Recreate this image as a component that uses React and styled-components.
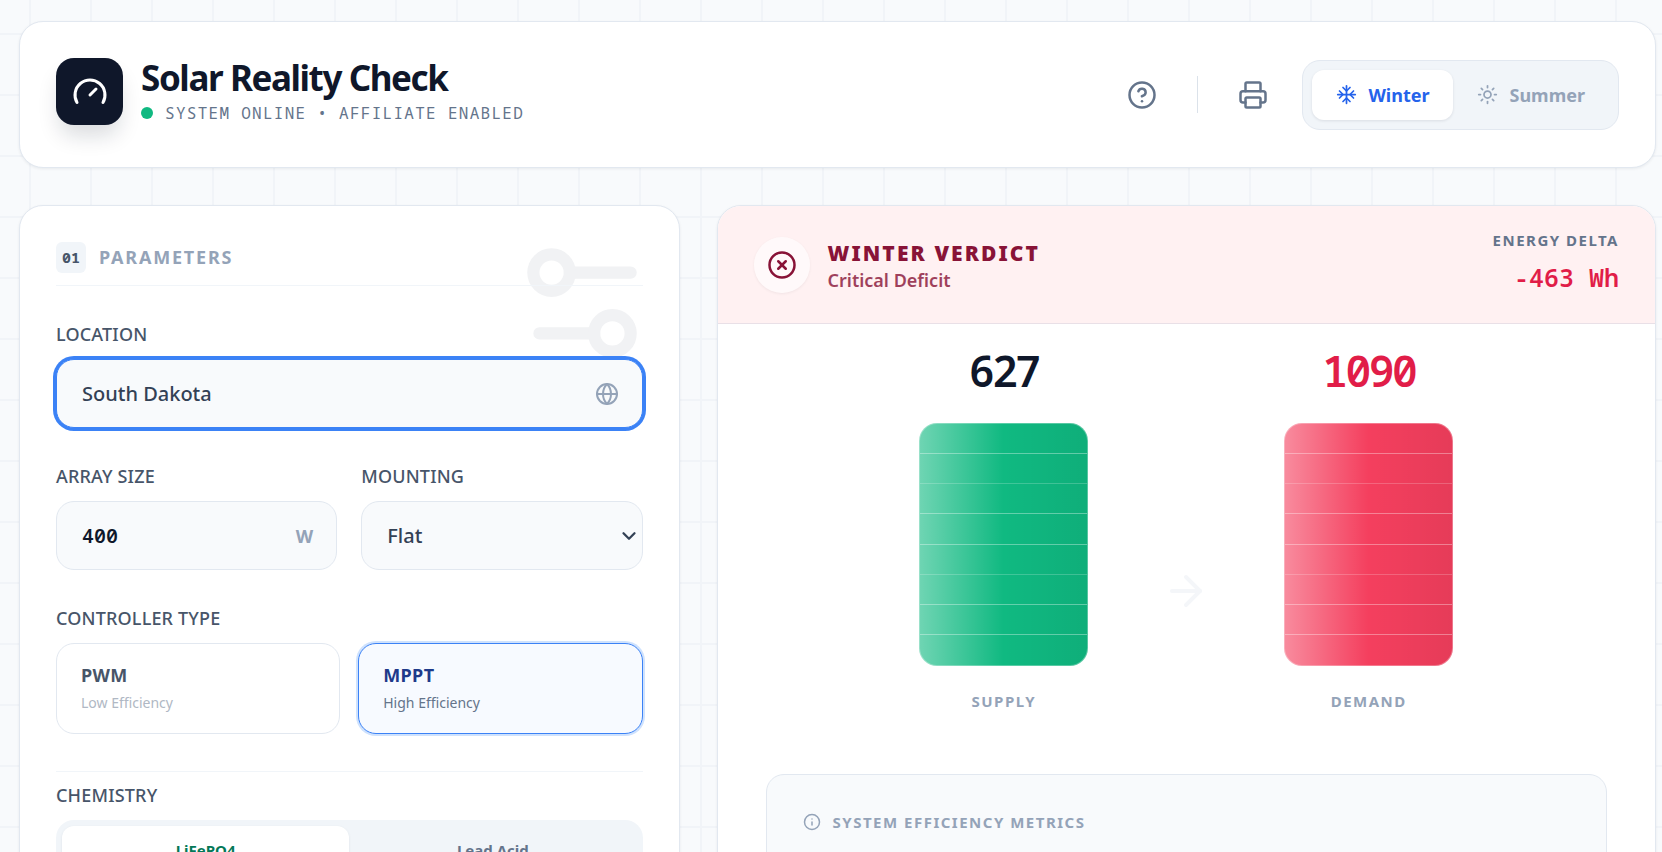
import React, { useState } from "react";
import styled, { createGlobalStyle, css } from "styled-components";
import {
	ArrowRight,
	ChevronDown,
	CircleQuestionMark,
	CircleX,
	Gauge,
	Globe,
	Info,
	Printer,
	Sun,
} from "lucide-react";

const sans = css`font-family: "Noto Sans", "Open Sans", sans-serif;`;
const mono = css`font-family: "Noto Sans Mono", "DejaVu Sans Mono", monospace;`;

const GlobalStyle = createGlobalStyle`
	* { box-sizing: border-box; }

	body {
		margin: 0;
		color: #0f172a;
		background-color: #f8fafc;
		background-image:
			linear-gradient(to right, #f1f4f8 2px, transparent 2px),
			linear-gradient(to bottom, #f1f4f8 2px, transparent 2px);
		background-size: 61px 61px;
		background-position: 29px 33px;
		${sans}
	}

	button, input, select { font: inherit; color: inherit; }
	button { cursor: pointer; }
`;

const Page = styled.div`
	display: flex;
	flex-direction: column;
	gap: 37px;
	padding: 21px 6px 37px 19px;
`;

const card = css`
	background: #fff;
	border: 1px solid #e2e8f0;
	border-radius: 24px;
	box-shadow: 0 1px 3px rgba(15, 23, 42, 0.07);
`;

const Header = styled.header`
	${card};
	display: flex;
	align-items: center;
	justify-content: space-between;
	padding: 36px;
`;

const Brand = styled.div`
	display: flex;
	align-items: center;
	gap: 18px;
	margin-bottom: 6px;
`;

const Logo = styled.div`
	display: flex;
	align-items: center;
	justify-content: center;
	width: 67px;
	height: 67px;
	color: #fff;
	background: #0f172a;
	border-radius: 18px;
	box-shadow: 0 14px 22px -4px rgba(15, 23, 42, 0.16);
`;

const BrandText = styled.div`padding-top: 2px;`;

const Title = styled.h1`
	margin: 0 0 5px;
	font-size: 35px;
	font-weight: 700;
	line-height: 36px;
	letter-spacing: -0.04em;
`;

const Status = styled.div`
	display: flex;
	align-items: center;
	gap: 12px;
	${mono};
	font-size: 16px;
	line-height: 24px;
	letter-spacing: 0.08em;
	color: #64748b;

	&::before {
		content: "";
		width: 12px;
		height: 12px;
		border-radius: 50%;
		background: #10b981;
	}
`;

const Actions = styled.div`
	display: flex;
	align-items: center;
	gap: 22px;
`;

const IconButton = styled.button`
	display: flex;
	padding: 12px;
	color: #64748b;
	background: none;
	border: 0;
`;

const Separator = styled.div`
	width: 1px;
	height: 37px;
	margin: 0 6px;
	background: #dbe2ea;
`;

const Toggle = styled.div`
	display: flex;
	padding: 9px;
	background: #f1f5f9;
	border: 1px solid #e2e8f0;
	border-radius: 18px;
`;

const ToggleButton = styled.button`
	display: flex;
	align-items: center;
	gap: 11px;
	padding: 0 24px;
	border: 0;
	border-radius: 12px;
	font-size: 18px;
	font-weight: 700;
	line-height: 50px;
	color: ${({ $active }) => ($active ? "#2563eb" : "#94a3b8")};
	background: ${({ $active }) => ($active ? "#fff" : "transparent")};
	${({ $active }) => $active && "box-shadow: 0 1px 3px rgba(15, 23, 42, 0.1);"}
`;

const Columns = styled.main`
	display: grid;
	grid-template-columns: repeat(12, 1fr);
	gap: 37px;
	align-items: start;
`;

const Parameters = styled.section`
	${card};
	position: relative;
	grid-column: span 5;
	padding: 36px;
`;

const Watermark = styled.svg`
	position: absolute;
	top: 24px;
	right: 24px;
	width: 146px;
	height: 146px;
	fill: none;
	stroke: #f1f2f4;
	stroke-width: 2;
	stroke-linecap: round;
`;

const SectionHeader = styled.h2`
	position: relative;
	display: flex;
	align-items: center;
	gap: 13px;
	margin: 0 0 36px;
	padding-bottom: 12px;
	border-bottom: 1px solid #f1f5f9;
	font-size: 18px;
	font-weight: 700;
	line-height: 31px;
	letter-spacing: 0.1em;
	color: #94a3b8;
`;

const Step = styled.span`
	width: 30px;
	text-align: center;
	${mono};
	font-size: 15px;
	letter-spacing: 0;
	color: #475569;
	background: #f1f5f9;
	border-radius: 6px;
`;

const Fields = styled.div`
	position: relative;
	display: grid;
	grid-template-columns: 1fr 1fr;
	gap: 36px 24px;
`;

const Field = styled.div`
	${({ $wide }) => $wide && "grid-column: 1 / -1;"}
	min-width: 0;
`;

const label = css`
	display: block;
	margin-bottom: 13px;
	font-size: 18px;
	font-weight: 500;
	line-height: 24px;
	letter-spacing: 0.01em;
	color: #475569;
`;

const Label = styled.label`${label};`;
const GroupLabel = styled.div`${label};`;

const Control = styled.div`
	position: relative;

	svg, span {
		position: absolute;
		top: 50%;
		right: ${({ $inset }) => $inset || "24px"};
		transform: translateY(-50%);
		pointer-events: none;
		color: ${({ $dark }) => ($dark ? "#334155" : "#94a3b8")};
	}

	span {
		font-size: 18px;
		font-weight: 700;
	}
`;

const box = css`
	display: block;
	width: 100%;
	height: 69px;
	padding: 0 25px;
	color: #334155;
	background: #f8fafc;
	border: 1px solid #e2e8f0;
	border-radius: 18px;
	outline: none;
	font-size: 20px;
	font-weight: 500;
`;

const Input = styled.input`
	${box};

	${({ $focused }) => $focused && css`
		border-color: #3b82f6;
		box-shadow: 0 0 0 3px #3b82f6;
	`}

	${({ $numeric }) => $numeric && css`
		${mono};
		font-weight: 600;
		color: #0f172a;
	`}
`;

const Select = styled.select`
	${box};
	appearance: none;
`;

const Options = styled.div`
	display: grid;
	grid-template-columns: 1fr 1fr;
	gap: 18px;
`;

const Option = styled.button`
	display: flex;
	flex-direction: column;
	justify-content: center;
	gap: 2px;
	height: 91px;
	padding: 0 24px 2px;
	text-align: left;
	border: 1px solid ${({ $active }) => ($active ? "#3b82f6" : "#e2e8f0")};
	border-radius: 18px;
	background: ${({ $active }) => ($active ? "#f7faff" : "#fff")};
	${({ $active }) => $active && "box-shadow: 0 0 0 2px #cfe2fd;"}

	strong {
		font-size: 18px;
		line-height: 28px;
		letter-spacing: 0.02em;
		color: ${({ $active }) => ($active ? "#1e3a8a" : "#475569")};
	}

	small {
		font-size: 14px;
		line-height: 24px;
		color: ${({ $active }) => ($active ? "#64748b" : "#b0b8c4")};
	}
`;

const Battery = styled.div`
	margin-top: 37px;
	padding-top: 11px;
	border-top: 1px solid #f1f5f9;
`;

const Segmented = styled.div`
	display: grid;
	grid-template-columns: 1fr 1fr;
	padding: 6px;
	background: #f1f5f9;
	border-radius: 18px;
`;

const Segment = styled.button`
	border: 0;
	border-radius: 12px;
	font-size: 15px;
	font-weight: 700;
	line-height: 46px;
	color: ${({ $active }) => ($active ? "#047857" : "#64748b")};
	background: ${({ $active }) => ($active ? "#fff" : "transparent")};
	${({ $active }) => $active && "box-shadow: 0 1px 3px rgba(15, 23, 42, 0.08);"}
`;

const Results = styled.section`
	${card};
	grid-column: span 7;
	overflow: hidden;
`;

const Verdict = styled.div`
	display: flex;
	align-items: center;
	gap: 18px;
	padding: 23px 36px 22px;
	background: #fff1f2;
	border-bottom: 1px solid #e9e0e7;
`;

const VerdictIcon = styled.div`
	display: flex;
	padding: 13px;
	color: #881337;
	background: rgba(255, 255, 255, 0.6);
	border-radius: 50%;
	box-shadow: 0 1px 3px rgba(15, 23, 42, 0.06);
`;

const VerdictText = styled.div`
	flex: 1;
	padding-top: 3px;
	color: #881337;

	h2 {
		margin: 0;
		font-size: 21px;
		font-weight: 900;
		line-height: 28px;
		letter-spacing: 0.1em;
	}

	p {
		margin: 0;
		font-size: 18px;
		font-weight: 600;
		line-height: 27px;
		opacity: 0.8;
	}
`;

const caption = css`
	font-size: 15px;
	font-weight: 700;
	line-height: 22px;
	letter-spacing: 0.1em;
	color: #94a3b8;
`;

const Delta = styled.dl`
	margin: 0;
	padding-bottom: 6px;
	text-align: right;

	dt {
		${caption};
		color: #64748b;
	}

	dd {
		margin: 8px 0 0;
		${mono};
		font-size: 25px;
		font-weight: 600;
		line-height: 36px;
		color: #e11d48;
	}
`;

const Body = styled.div`padding: 25px 48px 48px;`;

const Chart = styled.div`
	display: flex;
	align-items: flex-end;
	justify-content: center;
	gap: 74px;
	margin-bottom: 62px;
`;

const Arrow = styled(ArrowRight)`
	flex: none;
	margin-bottom: 97px;
	color: #f4f6f9;
`;

const Bar = styled.figure`
	display: flex;
	flex-direction: column;
	align-items: center;
	width: 169px;
	margin: 0;

	output {
		${mono};
		font-size: 43px;
		font-weight: 600;
		line-height: 44px;
		letter-spacing: -0.06em;
		color: ${({ $value }) => $value};
	}

	figcaption {
		${caption};
		margin-top: 24px;
	}
`;

const Cells = styled.div`
	display: grid;
	grid-template-rows: repeat(8, 1fr);
	width: 100%;
	height: 243px;
	margin-top: 30px;
	overflow: hidden;
	border: 1px solid rgba(255, 255, 255, 0.3);
	border-radius: 18px;
	background:
		linear-gradient(
			to right,
			rgba(255, 255, 255, 0.4),
			rgba(255, 255, 255, 0) 50%,
			rgba(0, 0, 0, 0.06)
		)
		border-box,
		${({ $color }) => $color} border-box;
`;

const Cell = styled.div`
	border-bottom: 1px solid rgba(255, 255, 255, 0.35);

	&:nth-child(3n + 2) {
		border-color: rgba(255, 255, 255, 0.2);
	}

	&:last-child {
		border: 0;
	}
`;

const Metrics = styled.div`
	min-height: 220px;
	padding: 36px;
	background: #f8fafc;
	border: 1px solid #e2e8f0;
	border-radius: 18px;

	h3 {
		${caption};
		display: flex;
		align-items: center;
		gap: 12px;
		margin: 0;
	}
`;

const Snowflake = () =>
	<svg
		width="21"
		height="21"
		viewBox="0 0 24 24"
		fill="none"
		stroke="currentColor"
		strokeWidth="2"
		strokeLinecap="round"
		strokeLinejoin="round"
		aria-hidden="true"
	>
		<path d="M2 12h20M12 2v20" />
		<path d="m20 16-4-4 4-4M4 8l4 4-4 4M16 4l-4 4-4-4M8 20l4-4 4 4" />
	</svg>;

const Sliders = () =>
	<Watermark viewBox="0 0 24 24" aria-hidden="true">
		<path d="M20 7h-10M14 17H5" />
		<circle cx="17" cy="17" r="3" />
		<circle cx="7" cy="7" r="3" />
	</Watermark>;

const Stack = ({ value, valueColor, color, name }) =>
	<Bar $value={valueColor}>
		<output>{value}</output>
		<Cells $color={color}>
			{Array.from({ length: 8 }, (_, i) => <Cell key={i} />)}
		</Cells>
		<figcaption>{name}</figcaption>
	</Bar>;

const controllers = [
	{ name: "PWM", note: "Low Efficiency" },
	{ name: "MPPT", note: "High Efficiency" },
];

const chemistries = ["LiFePO4", "Lead Acid"];

export default function App() {
	const [season, setSeason] = useState("Winter");
	const [controller, setController] = useState("MPPT");
	const [chemistry, setChemistry] = useState("LiFePO4");

	return (
		<Page>
			<GlobalStyle />

			<Header>
				<Brand>
					<Logo>
						<Gauge size={36} />
					</Logo>
					<BrandText>
						<Title>Solar Reality Check</Title>
						<Status>SYSTEM ONLINE • AFFILIATE ENABLED</Status>
					</BrandText>
				</Brand>

				<Actions>
					<IconButton aria-label="Help">
						<CircleQuestionMark size={30} />
					</IconButton>
					<Separator />
					<IconButton aria-label="Print">
						<Printer size={30} />
					</IconButton>
					<Toggle>
						<ToggleButton
							$active={season === "Winter"}
							onClick={() => setSeason("Winter")}
						>
							<Snowflake />
							Winter
						</ToggleButton>
						<ToggleButton
							$active={season === "Summer"}
							onClick={() => setSeason("Summer")}
						>
							<Sun size={21} />
							Summer
						</ToggleButton>
					</Toggle>
				</Actions>
			</Header>

			<Columns>
				<Parameters>
					<Sliders />
					<SectionHeader>
						<Step>01</Step>
						PARAMETERS
					</SectionHeader>

					<Fields>
						<Field $wide>
							<Label htmlFor="location">LOCATION</Label>
							<Control>
								<Input id="location" $focused defaultValue="South Dakota" />
								<Globe size={24} />
							</Control>
						</Field>

						<Field>
							<Label htmlFor="array">ARRAY SIZE</Label>
							<Control>
								<Input id="array" $numeric defaultValue="400" />
								<span>W</span>
							</Control>
						</Field>

						<Field>
							<Label htmlFor="mounting">MOUNTING</Label>
							<Control $dark $inset="3px">
								<Select id="mounting" defaultValue="Flat">
									<option>Flat</option>
								</Select>
								<ChevronDown size={22} strokeWidth={2.5} />
							</Control>
						</Field>

						<Field $wide>
							<GroupLabel id="controller">CONTROLLER TYPE</GroupLabel>
							<Options role="group" aria-labelledby="controller">
								{controllers.map(({ name, note }) =>
									<Option
										key={name}
										$active={controller === name}
										onClick={() => setController(name)}
									>
										<strong>{name}</strong>
										<small>{note}</small>
									</Option>,
								)}
							</Options>
						</Field>
					</Fields>

					<Battery>
						<GroupLabel id="chemistry">CHEMISTRY</GroupLabel>
						<Segmented role="group" aria-labelledby="chemistry">
							{chemistries.map(name =>
								<Segment
									key={name}
									$active={chemistry === name}
									onClick={() => setChemistry(name)}
								>
									{name}
								</Segment>,
							)}
						</Segmented>
					</Battery>
				</Parameters>

				<Results>
					<Verdict>
						<VerdictIcon>
							<CircleX size={30} />
						</VerdictIcon>
						<VerdictText>
							<h2>WINTER VERDICT</h2>
							<p>Critical Deficit</p>
						</VerdictText>
						<Delta>
							<dt>ENERGY DELTA</dt>
							<dd>-463 Wh</dd>
						</Delta>
					</Verdict>

					<Body>
						<Chart>
							<Stack value="627" valueColor="#0f172a" color="#10b981" name="SUPPLY" />
							<Arrow size={48} />
							<Stack value="1090" valueColor="#e11d48" color="#f43f5e" name="DEMAND" />
						</Chart>

						<Metrics>
							<h3>
								<Info size={18} />
								SYSTEM EFFICIENCY METRICS
							</h3>
						</Metrics>
					</Body>
				</Results>
			</Columns>
		</Page>
	);
}
